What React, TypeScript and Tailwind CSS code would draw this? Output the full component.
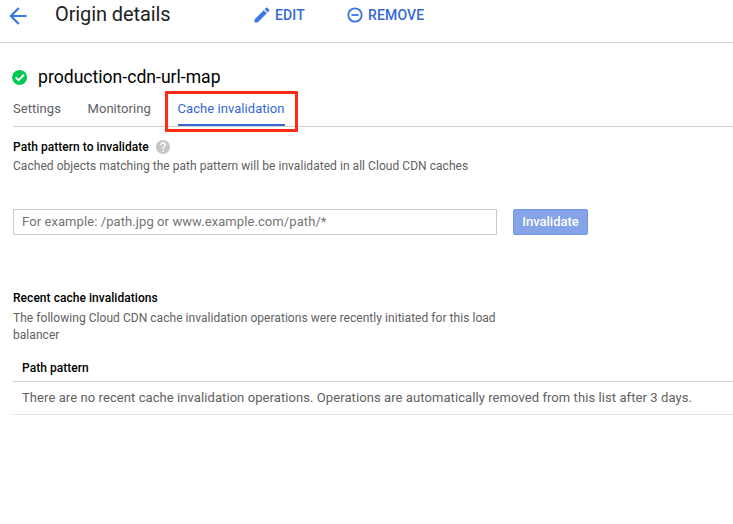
import React from "react";

function BackArrow() {
  return (
    <svg className="block h-[26px] w-[26px] shrink-0" viewBox="0 0 24 24" fill="#3b78e7">
      <path d="M20 11H7.83l5.59-5.59L12 4l-8 8 8 8 1.41-1.41L7.83 13H20z" />
    </svg>
  );
}

export default function App() {
  return (
    <div className="h-[524px] w-[733px] overflow-hidden bg-white font-['Roboto',sans-serif] text-[#212121]">
      <header className="flex h-[43px] items-start border-b border-[#d0d0d0] pl-[4.5px]">
        <div className="mt-[3px]"><BackArrow /></div>
        <h1 className="ml-[24.5px] mt-[2px] w-[197px] text-[20px] leading-[24px] tracking-[-0.1px]">Origin details</h1>
        <button className="flex h-[30px] w-[94px] items-center gap-[3px] text-[14px] font-medium tracking-[0.15px] text-[#3367d6]">
          <svg className="h-5 w-5" viewBox="0 0 24 24" fill="#3b78e7">
            <path d="M3 17.25V21h3.75L17.81 9.94l-3.75-3.75L3 17.25zM20.71 7.04a.996.996 0 0 0 0-1.41l-2.34-2.34a.996.996 0 0 0-1.41 0l-1.83 1.83 3.75 3.75 1.83-1.83z" />
          </svg>
          EDIT
        </button>
        <button className="flex h-[30px] items-center gap-[4px] text-[14px] font-medium tracking-[0.15px] text-[#3367d6]">
          <svg className="h-[18px] w-[18px]" viewBox="0 0 24 24" fill="none" stroke="#3b78e7" strokeWidth="2.5">
            <circle cx="12" cy="12" r="8.9" />
            <path d="M7.3 12h9.4" />
          </svg>
          REMOVE
        </button>
      </header>
      <main className="pl-[13px]">
        <div className="flex h-[48px] items-center gap-[10px] pt-[20px] text-black">
          <svg className="-ml-[1px] h-4 w-4" viewBox="0 0 16 16">
            <circle cx="7.6" cy="8.4" r="7.5" fill="#00c853" />
            <path d="M3.7 8.4l2.8 2.8L12 5.7" fill="none" stroke="white" strokeWidth="2" />
          </svg>
          <h2 className="text-[17.6px] leading-[24px]">production-cdn-url-map</h2>
        </div>
        <nav className="flex h-[36px] whitespace-nowrap border-b border-[#d0d0d0] text-[13px] leading-[36px] tracking-[0.06px] text-[#616161]">
          <span className="w-[74.5px]">Settings</span>
          <span className="w-[77px]">Monitoring</span>
          <span className="h-[41px] w-[133px] rounded-[1px] border-[3px] border-[#ff2a12] px-[10px] text-[#3367d6]">
            <span className="block h-[32px] border-b-2 border-[#3367d6] leading-[30px]">Cache invalidation</span>
          </span>
        </nav>
        <section className="h-[82px] pt-[12px]">
          <div className="flex h-[16px] items-center text-[12px] font-medium tracking-[0.04px] text-black">
            Path pattern to invalidate
            <svg className="ml-[7px] h-[14px] w-[14px]" viewBox="2 2 20 20" fill="#c6c6c6">
              <path d="M12 2C6.48 2 2 6.48 2 12s4.48 10 10 10 10-4.48 10-10S17.52 2 12 2zm1 17h-2v-2h2v2zm2.07-7.75-.9.92C13.45 12.9 13 13.5 13 15h-2v-.5c0-1.1.45-2.1 1.17-2.83l1.24-1.26c.37-.36.59-.86.59-1.41 0-1.1-.9-2-2-2s-2 .9-2 2H8c0-2.21 1.79-4 4-4s4 1.79 4 4c0 .88-.36 1.68-.93 2.25z" />
            </svg>
          </div>
          <p className="mt-[3px] text-[12px] leading-[17px] tracking-[0.044px] text-[#616161]">Cached objects matching the path pattern will be invalidated in all Cloud CDN caches</p>
        </section>
        <div className="flex gap-[16px] text-[13px]">
          <input className="h-[26px] w-[484px] border border-[#cccccc] px-[8px] pb-[2px] tracking-[0.085px] placeholder:text-[#757575]" placeholder="For example: /path.jpg or www.example.com/path/*" />
          <button className="h-[26px] w-[75px] rounded-[2px] border border-[#6f97e6] bg-[#85a3e6] font-medium text-white">Invalidate</button>
        </div>
        <section className="mt-[55px] text-[12px] tracking-[0.044px]">
          <h3 className="font-medium leading-[16px] text-black">Recent cache invalidations</h3>
          <p className="mt-[4px] w-[500px] leading-[17px] text-[#616161]">The following Cloud CDN cache invalidation operations were recently initiated for this load balancer</p>
        </section>
        <div className="mt-[11px]">
          <div className="h-[27px] border-b border-[#d0d0d0] pl-[9px] text-[12px] font-medium leading-[26px] tracking-[0.04px] text-black">Path pattern</div>
          <div className="h-[33px] border-b border-[#e4e4e4] pl-[9px] text-[13px] leading-[32px] tracking-[0.08px] text-[#616161]">There are no recent cache invalidation operations. Operations are automatically removed from this list after 3 days.</div>
        </div>
      </main>
    </div>
  );
}
